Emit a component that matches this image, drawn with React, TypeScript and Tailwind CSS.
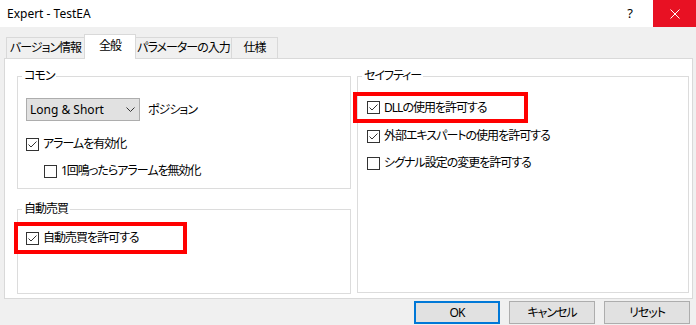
import React from 'react'

const font = "font-['Noto_Sans','Noto_Sans_CJK_JP',sans-serif] [font-feature-settings:'palt']"

function CheckBox({ checked }: { checked?: boolean }) {
    return (
        <svg width="13" height="13" viewBox="0 0 13 13" className="shrink-0">
            <rect x="0.5" y="0.5" width="12" height="12" fill="#fff" stroke="#333" />
            {checked && <path d="M2.5 6.5 L5 9 L10.5 3.5" fill="none" stroke="#333" strokeWidth="1" />}
        </svg>
    )
}

function Check({ label, checked, className }: { label: string; checked?: boolean; className?: string }) {
    return (
        <div className={`flex items-center h-[16px] ${className ?? ''}`}>
            <CheckBox checked={checked} />
            <span className="ml-[4px] whitespace-nowrap tracking-[-1px]">{label}</span>
        </div>
    )
}

function Group({ title, className, children }: { title: string; className?: string; children?: React.ReactNode }) {
    return (
        <fieldset className={`border border-[#dcdcdc] min-w-0 ${className ?? ''}`}>
            <legend className="ml-[4px] px-[2px] leading-[16px] tracking-[-1px]">{title}</legend>
            {children}
        </fieldset>
    )
}

function Button({ label, primary }: { label: string; primary?: boolean }) {
    return (
        <button
            className={`w-[86px] h-[23px] bg-[#e1e1e1] flex items-center justify-center leading-none tracking-[-1px] ${
                primary ? 'border-2 border-[#0078d7]' : 'border border-[#adadad]'
            }`}
        >
            {label}
        </button>
    )
}

function Tab({ label, active, className }: { label: string; active?: boolean; className?: string }) {
    return (
        <div
            className={`flex items-center justify-center whitespace-nowrap tracking-[-1px] border-t border-[#d9d9d9] ${
                active ? 'relative z-10 -mb-px h-[25px] bg-white pb-[2px]' : 'h-[21px]'
            } ${className ?? ''}`}
        >
            {label}
        </div>
    )
}

export default function App() {
    return (
        <div className={`w-[696px] h-[325px] bg-[#f0f0f0] text-[12px] text-black overflow-hidden ${font}`}>
            <div className="h-[27px] bg-white flex items-center">
                <div className="pl-[7px] flex-1">Expert - TestEA</div>
                <div className="w-[46px] h-full flex items-center justify-center text-[13px]">?</div>
                <div className="w-[43px] h-full bg-[#e81123] flex items-center justify-center">
                    <svg width="10" height="10" viewBox="0 0 10 10">
                        <path d="M0.5 0.5 L9.5 9.5 M9.5 0.5 L0.5 9.5" stroke="#fff" strokeWidth="1" />
                    </svg>
                </div>
            </div>

            <div className="pt-[7px]">
                <div className="flex items-end h-[24px] ml-[6px]">
                    <Tab label="バージョン情報" className="w-[78px] border-l" />
                    <Tab label="全般" active className="w-[52px] border-l border-r" />
                    <Tab label="パラメーターの入力" className="w-[96px] border-r" />
                    <Tab label="仕様" className="w-[46px] border-r" />
                </div>

                <div className="ml-[4px] w-[689px] h-[241px] bg-white border border-[#d9d9d9] flex gap-[6px] pl-[12px] pt-[9px]">
                    <div className="w-[334px] flex flex-col">
                        <Group title="コモン" className="h-[121px]">
                            <div className="pl-[8px] pt-[14px]">
                                <div className="flex items-center">
                                    <div className="w-[114px] h-[23px] border border-[#adadad] bg-[#e1e1e1] flex items-center justify-between pl-[3px] pr-[4px]">
                                        <span>Long &amp; Short</span>
                                        <svg width="9" height="5" viewBox="0 0 9 5">
                                            <path d="M0.5 0.5 L4.5 4.5 L8.5 0.5" fill="none" stroke="#333" strokeWidth="1" />
                                        </svg>
                                    </div>
                                    <span className="ml-[8px] tracking-[-1px]">ポジション</span>
                                </div>
                                <Check label="アラームを有効化" checked className="mt-[15px]" />
                                <Check label="1回鳴ったらアラームを無効化" className="mt-[11px] ml-[18px]" />
                            </div>
                        </Group>
                        <Group title="自動売買" className="mt-[12px] h-[93px]">
                            <div className="ml-[-4px] mt-[5px] w-[173px] h-[32px] border-[4px] border-[#ff0000] flex items-center pl-[8px]">
                                <Check label="自動売買を許可する" checked />
                            </div>
                        </Group>
                    </div>
                    <Group title="セイフティー" className="w-[332px] h-[225px]">
                        <div className="ml-[-5px] mt-[8px] w-[175px] h-[31px] border-[4px] border-[#ff0000] flex items-center pl-[10px]">
                            <Check label="DLLの使用を許可する" checked />
                        </div>
                        <div className="pl-[9px]">
                            <Check label="外部エキスパートの使用を許可する" checked className="mt-[5px]" />
                            <Check label="シグナル設定の変更を許可する" className="mt-[11px]" />
                        </div>
                    </Group>
                </div>

                <div className="flex justify-end gap-[9px] pr-[6px] mt-[2px]">
                    <Button label="OK" primary />
                    <Button label="キャンセル" />
                    <Button label="リセット" />
                </div>
            </div>
        </div>
    )
}
